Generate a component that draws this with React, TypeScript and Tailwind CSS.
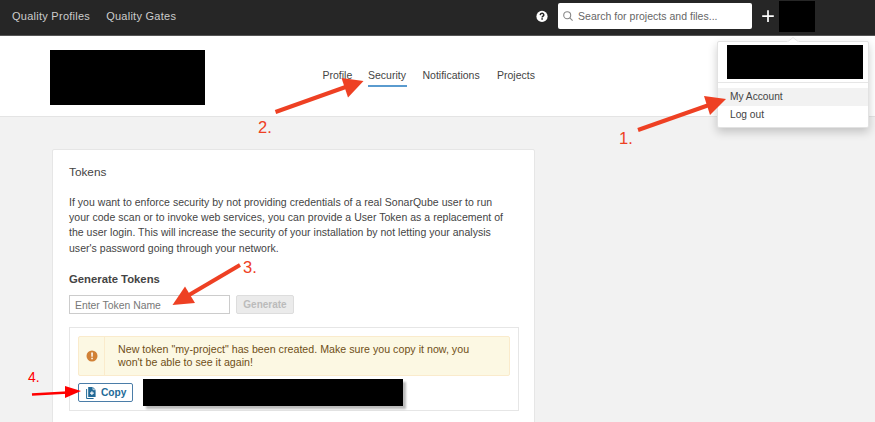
import type { ReactNode } from "react";

const paragraph = [
  "If you want to enforce security by not providing credentials of a real SonarQube user to run",
  "your code scan or to invoke web services, you can provide a User Token as a replacement of",
  "the user login. This will increase the security of your installation by not letting your analysis",
  "user's password going through your network.",
];

function TopBar() {
  return (
    <header className="flex h-[36px] shrink-0 items-start border-b border-[#555] bg-[#262626] text-[11px] text-[#ccc]">
      <nav className="flex gap-[16px] pl-[12px] pt-[8px] leading-[16px] tracking-[0.26px]">
        <a>Quality Profiles</a>
        <a>Quality Gates</a>
      </nav>
      <div className="ml-auto flex pr-[60px]">
        <svg className="mr-[10px] mt-[10px] h-[12px] w-[12px]" viewBox="0 0 12 12">
          <circle cx="6" cy="6.4" r="5.6" fill="#fff" />
          <path d="M4.2 5.1C4.3 2.8 7.8 2.8 7.8 4.9C7.8 6.1 6.1 6 6.1 7.5" fill="none" stroke="#262626" strokeWidth="1.5" />
          <rect x="5.3" y="8.2" width="1.6" height="1.5" fill="#262626" />
        </svg>
        <div className="mt-[3px] flex h-[26px] w-[194px] items-center rounded-[2px] bg-white text-[10.5px] text-[#666]">
          <svg className="ml-[5px] h-[10px] w-[10px]" viewBox="0 0 10 10" fill="none" stroke="#888" strokeWidth="1.1">
            <circle cx="4.2" cy="4.2" r="3.5" />
            <path d="M6.8 6.8L9.6 9.6" />
          </svg>
          <span className="ml-[5px] whitespace-nowrap pt-[2px] tracking-[0.02px]">Search for projects and files...</span>
        </div>
        <svg className="ml-[10px] mt-[10px] h-[12px] w-[12px]" viewBox="0 0 12 12" stroke="#fff" strokeWidth="1.7">
          <path d="M6 .3V12M.2 6.2H11.8" />
        </svg>
        <div className="ml-[5px] mt-px h-[31px] w-[36px] bg-black" />
      </div>
    </header>
  );
}

function AccountMenu() {
  return (
    <div className="absolute left-[717px] top-[41px] h-[87px] w-[152px] rounded-[2px] border border-[#e2e2e2] bg-white text-[10.2px] text-[#444] shadow-[0_4px_10px_rgba(0,0,0,0.2)]">
      <svg className="absolute left-[69px] top-[-5px] h-[6px] w-[12px]" viewBox="0 0 12 6">
        <path d="M0 5L6 0L12 5V6H0Z" fill="#fff" />
        <path d="M1 4.500L6 .5L11 4.500" fill="none" stroke="#e2e2e2" strokeWidth=".8" />
      </svg>
      <div className="ml-[9px] mt-[3px] h-[34px] w-[136px] bg-black" />
      <div className="mt-[3px] h-px bg-[#e6e6e6]" />
      <div className="mt-[5px] h-[18px] bg-[#f2f2f2] pl-[12px] leading-[18px]">My Account</div>
      <div className="h-[18px] pl-[12px] leading-[18px]">Log out</div>
    </div>
  );
}

function ProfileHeader() {
  return (
    <section className="flex h-[81px] shrink-0 items-start border-b border-[#e4e4e4] bg-white">
      <div className="ml-[50px] mt-[14px] h-[55px] w-[155px] bg-black" />
      <nav className="ml-[117.5px] mt-[31px] flex text-[10.5px] leading-[16px] text-[#444]">
        <a className="w-[45.5px]">Profile</a>
        <a className="mr-[16px] h-[20px] w-[38.5px] border-b-2 border-[#5a9bcf]">Security</a>
        <a className="w-[74.5px]">Notifications</a>
        <a>Projects</a>
      </nav>
    </section>
  );
}

function NewToken() {
  return (
    <div className="mt-[13px] h-[84px] w-[450px] border border-[#e6e6e6] px-[8px] pt-[8px]">
      <div className="flex h-[40px] w-[432px] rounded-[2px] border border-[#faebcc] bg-[#fcf8e3] text-[10.65px] leading-[13px] text-[#6f4f17]">
        <div className="flex w-[26px] items-center justify-center border-r border-[#faebcc]">
          <svg className="h-[12px] w-[12px]" viewBox="0 0 12 12">
            <circle cx="6" cy="6" r="5.5" fill="#d18136" />
            <path d="M5.2 2.4h1.7L6.7 6.8H5.4ZM5.3 7.8h1.5v1.5H5.3Z" fill="#fff" />
          </svg>
        </div>
        <p className="whitespace-nowrap pl-[13px] pt-[6px] tracking-[0.015px]">
          New token "my-project" has been created. Make sure you copy it now, you
          <br />
          won't be able to see it again!
        </p>
      </div>
      <div className="flex">
        <button className="mt-[7px] flex h-[19px] w-[55px] items-center rounded-[2px] border border-[#4b7da8] pl-[7px] text-[10.2px] font-bold text-[#236a97]">
          <svg className="mr-[5px] h-[12px] w-[10px]" viewBox="0 0 10 12">
            <path d="M2.2 0H7L9.6 2.7V10H2.2Z" fill="#236a97" />
            <path d="M7 0V2.7H9.6" fill="none" stroke="#fff" strokeWidth=".7" />
            <path d="M.6 2V11.5H7.6" fill="none" stroke="#236a97" />
            <path d="M5.9 4.2V8M4 6.1H7.8" stroke="#fff" strokeWidth="1.1" />
          </svg>
          Copy
        </button>
        <div className="ml-[10px] mt-[3px] h-[27px] w-[260px] bg-black shadow-[3px_3px_2px_#bbb]" />
      </div>
    </div>
  );
}

function TokensCard() {
  return (
    <main className="ml-[52px] mt-[32px] h-[300px] w-[483px] shrink-0 rounded-t-[2px] border border-[#e6e6e6] bg-white pl-[16px] text-[#444]">
      <h2 className="mt-[14px] text-[11.8px] leading-[16px]">Tokens</h2>
      <div className="mt-[14.5px] text-[10.5px] leading-[15.4px] tracking-[0.025px]">
        {paragraph.map((line) => (
          <p key={line} className="whitespace-nowrap">{line}</p>
        ))}
      </div>
      <h3 className="mt-[15px] text-[11.3px] font-bold leading-[16px]">Generate Tokens</h3>
      <div className="mt-[8px] flex gap-[6px]">
        <input
          className="h-[19px] w-[161px] border border-[#ccc] bg-white px-[5px] pt-px text-[10.4px] placeholder:text-[#777]"
          placeholder="Enter Token Name"
        />
        <button className="h-[19px] w-[58px] rounded-[2px] border border-[#ddd] bg-[#ebebeb] text-[10px] font-bold text-[#bbb]">
          Generate
        </button>
      </div>
      <NewToken />
    </main>
  );
}

function Label({ x, y, children }: { x: number; y: number; children: ReactNode }) {
  return <text x={x} y={y}>{children}</text>;
}

function Annotations() {
  return (
    <svg className="pointer-events-none absolute inset-0 h-[422px] w-[875px]" viewBox="0 0 875 422">
      <g stroke="#ee4023" strokeWidth="4">
        <path d="M638 130L709 105" />
        <path d="M275.5 112L347 86.500" />
        <path d="M240 265L189 295" />
      </g>
      <g fill="#ee4023">
        <path d="M726 99L704 96L710 115Z" />
        <path d="M363.500 81L341.500 78L348 97.500Z" />
        <path d="M172.500 305L185 286.500L195 303Z" />
      </g>
      <g fill="#ee4023" fontSize="16.500" fontFamily="Liberation Sans, sans-serif">
        <Label x={619} y={143.5}>1.</Label>
        <Label x={258} y={133}>2.</Label>
        <Label x={243} y={273}>3.</Label>
      </g>
      <path d="M32 394.500L68 392.500" stroke="#f00" strokeWidth="2.500" />
      <path d="M81 391L65 386V398Z" fill="#f00" />
      <text x="28" y="382" fill="#f00" fontSize="14" fontFamily="Liberation Sans, sans-serif">4.</text>
    </svg>
  );
}

export default function App() {
  return (
    <div className="relative flex h-[422px] w-[875px] flex-col overflow-hidden bg-[#f2f2f2] font-['Liberation_Sans',Arial,sans-serif]">
      <TopBar />
      <ProfileHeader />
      <TokensCard />
      <AccountMenu />
      <Annotations />
    </div>
  );
}
